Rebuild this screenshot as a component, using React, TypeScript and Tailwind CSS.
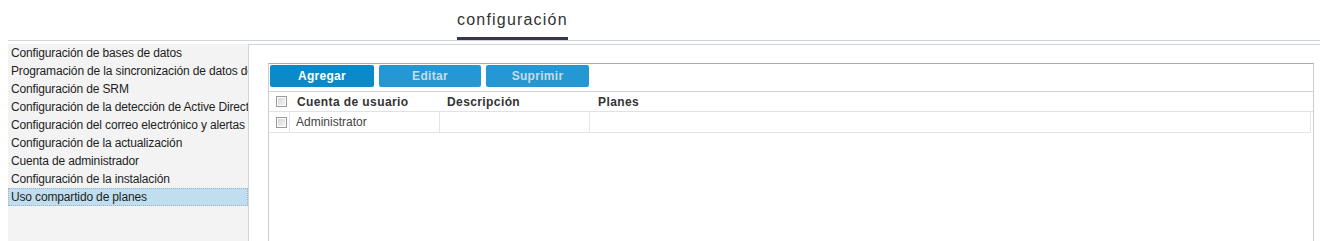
import React from "react";

const items = [
  "Configuración de bases de datos",
  "Programación de la sincronización de datos de SRM",
  "Configuración de SRM",
  "Configuración de la detección de Active Directory",
  "Configuración del correo electrónico y alertas",
  "Configuración de la actualización",
  "Cuenta de administrador",
  "Configuración de la instalación",
  "Uso compartido de planes",
];

function Check() {
  return (
    <span className="block w-[11px] h-[11px] border border-[#9a9a9a] bg-gradient-to-br from-[#d4d4d4] to-[#f7f7f7] shadow-[inset_0_0_0_1px_#fff]" />
  );
}

export default function App() {
  return (
    <div className="w-[1320px] h-[241px] bg-white overflow-hidden font-['Liberation_Sans',Arial,sans-serif] text-[12px] text-[#1e1e1e]">
      <div className="ml-[8px] h-[41px] border-b border-[#cfd5db] flex">
        <div className="ml-[449px] w-[111px] h-[40px] border-b-[3px] border-[#3b3350] flex items-center text-[16px] tracking-[1.2px] text-[#333] pt-[3px]">
          configuración
        </div>
      </div>
      <div className="mt-[3px] ml-[8px] flex h-[197px]">
        <div className="w-[241px] shrink-0 bg-[#f3f3f3] border-r border-[#cfd5db] tracking-[-0.15px]">
          {items.map((t, i) => (
            <div
              key={i}
              className={
                i === 8
                  ? "h-[18px] leading-[16px] pl-[2px] whitespace-nowrap overflow-hidden bg-[#c0def0] border border-dotted border-[#9ab4c4]"
                  : "h-[18px] leading-[18px] pl-[3px] whitespace-nowrap overflow-hidden"
              }
            >
              {t}
            </div>
          ))}
        </div>
        <div className="flex-1 border-t border-[#cfd5db] pl-[19px] pt-[18px]">
          <div className="w-[1046px] h-[200px] border border-[#c8ced6] border-t-[#a5acb6]">
            <div className="h-[28px] flex gap-[5px] pl-[1px] pt-[1px] border-b border-[#cfd5db]">
              <button className="w-[104px] h-[22px] rounded-[2px] bg-[#0b8ac9] text-white font-bold tracking-[0.3px]">
                Agregar
              </button>
              <button className="w-[102px] h-[22px] rounded-[2px] bg-[#2598d3] text-[#c6dcea] font-bold tracking-[0.3px]">
                Editar
              </button>
              <button className="w-[103px] h-[22px] rounded-[2px] bg-[#2598d3] text-[#c6dcea] font-bold tracking-[0.3px]">
                Suprimir
              </button>
            </div>
            <div className="h-[20px] flex items-center border-b border-[#dfe3e8] font-bold text-[#333] tracking-[0.4px]">
              <div className="w-[21px] pl-[7px] shrink-0">
                <Check />
              </div>
              <div className="w-[150px] pl-[7px]">Cuenta de usuario</div>
              <div className="w-[150px] pl-[7px]">Descripción</div>
              <div className="pl-[8px]">Planes</div>
            </div>
            <div className="w-[1042px] h-[21px] flex border-b border-r border-[#e5e5e5] text-[#444]">
              <div className="w-[21px] pl-[7px] shrink-0 flex items-center border-r border-[#e5e5e5]">
                <Check />
              </div>
              <div className="w-[150px] pl-[6px] leading-[20px] border-r border-[#e5e5e5]">Administrator</div>
              <div className="w-[150px] border-r border-[#e5e5e5]" />
              <div className="flex-1" />
            </div>
          </div>
        </div>
      </div>
    </div>
  );
}
